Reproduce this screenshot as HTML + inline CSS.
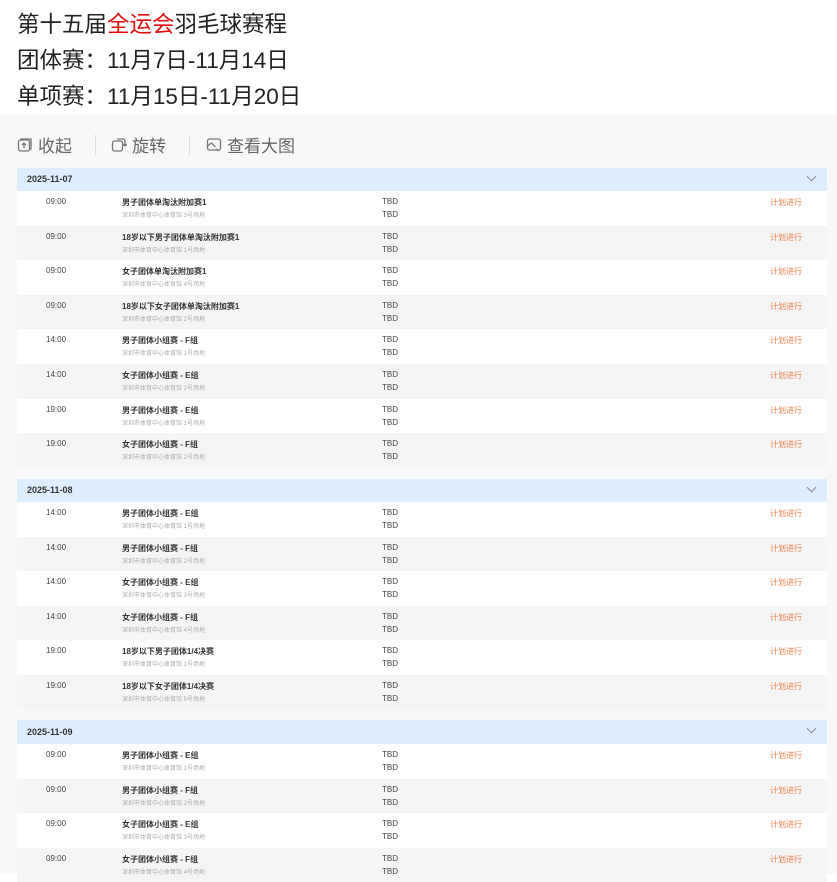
<!DOCTYPE html>
<html><head><meta charset="utf-8"><style>
body{margin:0;width:837px;height:874px;overflow:hidden;background:#fff;font-family:"Liberation Sans","Noto Sans CJK SC",sans-serif;position:relative}
.t{position:absolute;left:17px;font-size:22.5px;color:#222;line-height:36px}
.gray{position:absolute;left:0;top:115px;width:837px;height:759px;background:#f8f8f8}
.tb{position:absolute;top:132px;font-size:17px;color:#666;display:flex;align-items:center;gap:5px}
.sep{position:absolute;top:135px;width:1px;height:20px;background:#ddd}
.sec{position:absolute;left:17px;width:810px}
.hd{height:23px;background:#dfeeff;font-size:9px;font-weight:bold;color:#333;line-height:23px;padding-left:10px;position:relative}
.hd:after{content:"";position:absolute;right:12px;top:5px;width:6px;height:6px;border-right:1px solid #889;border-bottom:1px solid #889;transform:rotate(45deg)}
.r{height:34.6px;position:relative;background:#fff}
.r:nth-child(even){background:#f5f5f5}
.r span{position:absolute;font-size:8px;color:#444}
.tm{left:29px;top:6px}
.ti{left:105px;top:6px;font-weight:bold;color:#333!important}
.v{left:105px;top:19px;font-size:6px!important;color:#aaa!important}
.a{left:365px;top:6px}.b{left:365px;top:19px}
.s{left:753px;top:6px;color:#e8804a!important}
</style></head><body>
<div class="t" style="top:7px">第十五届<span style="color:#e01010">全运会</span>羽毛球赛程</div>
<div class="t" style="top:43px">团体赛：11月7日-11月14日</div>
<div class="t" style="top:79px">单项赛：11月15日-11月20日</div>
<div class="gray"></div>
<div class="tb" style="left:17px"><svg width="16" height="16" viewBox="0 0 16 16" fill="none" stroke="#777" stroke-width="1.3"><rect x="1.5" y="3" width="11" height="11" rx="2"/><path d="M4 3V2h10v10h-1.5M7 11V6M5 8l2-2 2 2"/></svg>收起</div>
<div class="sep" style="left:95px"></div>
<div class="tb" style="left:111px"><svg width="16" height="16" viewBox="0 0 16 16" fill="none" stroke="#777" stroke-width="1.3"><rect x="1.5" y="4" width="10" height="10" rx="2"/><path d="M6 2h6a2 2 0 0 1 2 2v5M12 7l2 2 2-2"/></svg>旋转</div>
<div class="sep" style="left:189px"></div>
<div class="tb" style="left:206px"><svg width="16" height="16" viewBox="0 0 16 16" fill="none" stroke="#777" stroke-width="1.3"><rect x="1.5" y="2" width="13" height="11" rx="2"/><path d="M1.5 9l4-3 4 4M10 12l3 2"/></svg>查看大图</div>

<div class="sec" style="top:168px"><div class="hd">2025-11-07</div><div>
<div class="r"><span class="tm">09:00</span><span class="ti">男子团体单淘汰附加赛1</span><span class="v">深圳市体育中心体育馆 3号场地</span><span class="a">TBD</span><span class="b">TBD</span><span class="s">计划进行</span></div>
<div class="r"><span class="tm">09:00</span><span class="ti">18岁以下男子团体单淘汰附加赛1</span><span class="v">深圳市体育中心体育馆 1号场地</span><span class="a">TBD</span><span class="b">TBD</span><span class="s">计划进行</span></div>
<div class="r"><span class="tm">09:00</span><span class="ti">女子团体单淘汰附加赛1</span><span class="v">深圳市体育中心体育馆 4号场地</span><span class="a">TBD</span><span class="b">TBD</span><span class="s">计划进行</span></div>
<div class="r"><span class="tm">09:00</span><span class="ti">18岁以下女子团体单淘汰附加赛1</span><span class="v">深圳市体育中心体育馆 2号场地</span><span class="a">TBD</span><span class="b">TBD</span><span class="s">计划进行</span></div>
<div class="r"><span class="tm">14:00</span><span class="ti">男子团体小组赛 - F组</span><span class="v">深圳市体育中心体育馆 1号场地</span><span class="a">TBD</span><span class="b">TBD</span><span class="s">计划进行</span></div>
<div class="r"><span class="tm">14:00</span><span class="ti">女子团体小组赛 - E组</span><span class="v">深圳市体育中心体育馆 2号场地</span><span class="a">TBD</span><span class="b">TBD</span><span class="s">计划进行</span></div>
<div class="r"><span class="tm">19:00</span><span class="ti">男子团体小组赛 - E组</span><span class="v">深圳市体育中心体育馆 1号场地</span><span class="a">TBD</span><span class="b">TBD</span><span class="s">计划进行</span></div>
<div class="r"><span class="tm">19:00</span><span class="ti">女子团体小组赛 - F组</span><span class="v">深圳市体育中心体育馆 2号场地</span><span class="a">TBD</span><span class="b">TBD</span><span class="s">计划进行</span></div>
</div></div>

<div class="sec" style="top:479px"><div class="hd">2025-11-08</div><div>
<div class="r"><span class="tm">14:00</span><span class="ti">男子团体小组赛 - E组</span><span class="v">深圳市体育中心体育馆 1号场地</span><span class="a">TBD</span><span class="b">TBD</span><span class="s">计划进行</span></div>
<div class="r"><span class="tm">14:00</span><span class="ti">男子团体小组赛 - F组</span><span class="v">深圳市体育中心体育馆 2号场地</span><span class="a">TBD</span><span class="b">TBD</span><span class="s">计划进行</span></div>
<div class="r"><span class="tm">14:00</span><span class="ti">女子团体小组赛 - E组</span><span class="v">深圳市体育中心体育馆 3号场地</span><span class="a">TBD</span><span class="b">TBD</span><span class="s">计划进行</span></div>
<div class="r"><span class="tm">14:00</span><span class="ti">女子团体小组赛 - F组</span><span class="v">深圳市体育中心体育馆 4号场地</span><span class="a">TBD</span><span class="b">TBD</span><span class="s">计划进行</span></div>
<div class="r"><span class="tm">19:00</span><span class="ti">18岁以下男子团体1/4决赛</span><span class="v">深圳市体育中心体育馆 1号场地</span><span class="a">TBD</span><span class="b">TBD</span><span class="s">计划进行</span></div>
<div class="r"><span class="tm">19:00</span><span class="ti">18岁以下女子团体1/4决赛</span><span class="v">深圳市体育中心体育馆 5号场地</span><span class="a">TBD</span><span class="b">TBD</span><span class="s">计划进行</span></div>
</div></div>

<div class="sec" style="top:720px"><div class="hd" style="height:24px;line-height:24px">2025-11-09</div><div>
<div class="r"><span class="tm">09:00</span><span class="ti">男子团体小组赛 - E组</span><span class="v">深圳市体育中心体育馆 1号场地</span><span class="a">TBD</span><span class="b">TBD</span><span class="s">计划进行</span></div>
<div class="r"><span class="tm">09:00</span><span class="ti">男子团体小组赛 - F组</span><span class="v">深圳市体育中心体育馆 2号场地</span><span class="a">TBD</span><span class="b">TBD</span><span class="s">计划进行</span></div>
<div class="r"><span class="tm">09:00</span><span class="ti">女子团体小组赛 - E组</span><span class="v">深圳市体育中心体育馆 3号场地</span><span class="a">TBD</span><span class="b">TBD</span><span class="s">计划进行</span></div>
<div class="r"><span class="tm">09:00</span><span class="ti">女子团体小组赛 - F组</span><span class="v">深圳市体育中心体育馆 4号场地</span><span class="a">TBD</span><span class="b">TBD</span><span class="s">计划进行</span></div>
</div></div>
</body></html>
